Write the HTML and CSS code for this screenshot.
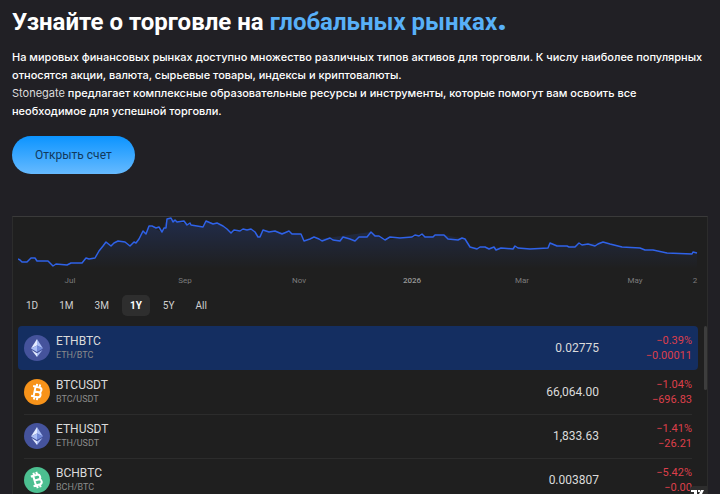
FILE: index.html
```html
<!DOCTYPE html>
<html lang="ru">

<head>
  <meta charset="UTF-8">
  <meta name="viewport" content="width=device-width, initial-scale=1.0">
  <title>Stonegate</title>
  <link rel="stylesheet" href="styles.css">
</head>

<body>
  <section class="intro">
    <h1>Узнайте о торговле на <span class="accent">глобальных рынках<b>.</b></span></h1>
    <p>На мировых финансовых рынках доступно множество различных типов активов для торговли. К числу наиболее популярных относятся акции, валюта, сырьевые товары, индексы и криптовалюты.</p>
    <p><span class="brand">Stonegate</span> предлагает комплексные образовательные ресурсы и инструменты, которые помогут вам освоить все<br> необходимое для успешной торговли.</p>
    <button type="button" class="open-account">Открыть счет</button>
  </section>

  <section class="widget">
    <svg class="chart" viewBox="0 0 684 72">
      <defs>
        <linearGradient id="fade" x1="0" y1="0" x2="0" y2="1">
          <stop offset="0" stop-color="#2962ff" stop-opacity="0.2" />
          <stop offset="1" stop-color="#2962ff" stop-opacity="0" />
        </linearGradient>
        <path id="line" d="M0 42L2 43L4 45H9L13 41L17 41L19 44L30 44L33 47L35 49L38 47L49 48L53 46L56 46L64 46L68 41L71 42L77 41L81 34L85 29L88 25L93 29L96 26L100 24L107 25L112 29L116 25L118 26L121 22L125 14L128 17L131 9L134 9L138 11L141 10L144 15L146 11L148 11L149 2L153 1L155 5L157 3L159 5L166 4L169 8L172 6L173 8L185 10L188 4L195 7L199 6L205 9L209 12L213 16L216 13L222 14L225 12L229 13L233 12L237 15L240 20H242L245 13L251 15L257 14L264 17L271 14L274 17L283 17L286 24L292 22L296 20L301 22L304 24L312 21L315 23L322 24L325 20L332 22L337 24L341 20L349 20L353 15L357 19L361 19L367 23L372 20L382 21L394 20L397 18L401 19L404 17L407 20L415 20L417 18L426 18L430 22L440 23L444 21L447 22L452 30L459 32L462 30L467 30L471 32L476 30L478 33L483 31L495 32L497 29L500 31L512 32L530 31L532 26L539 29L549 29L551 30L557 30L561 26L564 28L570 27L577 29L580 27L585 25L592 27L604 30L622 31L627 33L635 33L649 36L674 37L675 35L679 36" />
      </defs>
      <path fill="url(#fade)" d="M0 42L4 45H9L13 41L19 44H30L35 49L64 46L68 41H77L88 25L93 29L100 24L107 25L112 29L121 22L125 14L128 17L131 9L144 15L149 2L153 1L159 5L185 10L188 4L205 9L213 16L233 12L240 20L245 13L283 17L286 24L353 15L367 23L426 18L447 22L452 30L530 31L532 26L549 29L585 25L604 30L649 36L679 36V52H0Z" />
      <use href="#line" class="chart-line" />
      <g class="axis">
        <text x="52" y="66">Jul</text>
        <text x="167" y="66">Sep</text>
        <text x="281" y="66">Nov</text>
        <text x="394" y="66" class="year">2026</text>
        <text x="504" y="66">Mar</text>
        <text x="617" y="66">May</text>
        <text x="677" y="66">2</text>
      </g>
    </svg>

    <div class="ranges">
      <button type="button">1D</button>
      <button type="button">1M</button>
      <button type="button">3M</button>
      <button type="button" class="active">1Y</button>
      <button type="button">5Y</button>
      <button type="button">All</button>
    </div>

    <div class="symbols">
      <div class="row selected">
        <svg class="coin" viewBox="0 0 26 26">
          <circle cx="13" cy="13" r="13" fill="#45539c" />
          <path fill="#e3ebff" d="M13 4l-6 9.500 6-3z" />
          <path fill="#a9bdf5" d="M13 4l6 9.500-6-3z" />
          <path fill="#a9bdf5" d="M13 10.500l-6 3 6 3.500z" />
          <path fill="#7189d8" d="M13 10.500l6 3-6 3.500z" />
          <path fill="#e3ebff" d="M7.500 15l5.500 3.200V22z" />
          <path fill="#a9bdf5" d="M18.500 15L13 18.200V22z" />
        </svg>
        <div class="name">ETHBTC<small>ETH/BTC</small></div>
        <div class="price">0.02775</div>
        <div class="change">−0.39%<br>−0.00011</div>
      </div>
      <div class="row">
        <svg class="coin" viewBox="0 0 26 26">
          <circle cx="13" cy="13" r="13" fill="#f7931a" />
          <g transform="rotate(12 13 13)" fill="none" stroke="#fff" stroke-width="2">
            <path d="M8 8h6.500a2.400 2.400 0 0 1 0 4.900H10.500h4.500a2.600 2.600 0 0 1 0 5.100H8M10.500 8v10M11.500 5v3M14.500 5v3M11.500 18v3M14.500 18v3" />
          </g>
        </svg>
        <div class="name">BTCUSDT<small>BTC/USDT</small></div>
        <div class="price">66,064.00</div>
        <div class="change">−1.04%<br>−696.83</div>
      </div>
      <div class="row">
        <svg class="coin" viewBox="0 0 26 26">
          <circle cx="13" cy="13" r="13" fill="#45539c" />
          <path fill="#e3ebff" d="M13 4l-6 9.500 6-3z" />
          <path fill="#a9bdf5" d="M13 4l6 9.500-6-3z" />
          <path fill="#a9bdf5" d="M13 10.500l-6 3 6 3.500z" />
          <path fill="#7189d8" d="M13 10.500l6 3-6 3.500z" />
          <path fill="#e3ebff" d="M7.500 15l5.500 3.200V22z" />
          <path fill="#a9bdf5" d="M18.500 15L13 18.200V22z" />
        </svg>
        <div class="name">ETHUSDT<small>ETH/USDT</small></div>
        <div class="price">1,833.63</div>
        <div class="change">−1.41%<br>−26.21</div>
      </div>
      <div class="row">
        <svg class="coin" viewBox="0 0 26 26">
          <circle cx="13" cy="13" r="13" fill="#4cbf90" />
          <g transform="rotate(-16 13 13)" fill="none" stroke="#fff" stroke-width="2">
            <path d="M8 8h6.500a2.400 2.400 0 0 1 0 4.900H10.500h4.500a2.600 2.600 0 0 1 0 5.100H8M10.500 8v10M11.500 5v3M14.500 5v3M11.500 18v3M14.500 18v3" />
          </g>
        </svg>
        <div class="name">BCHBTC<small>BCH/BTC</small></div>
        <div class="price">0.003807</div>
        <div class="change">−5.42%<br>−0.00</div>
      </div>
      <div class="scrollbar"></div>
    </div>
    <svg class="tv-logo" viewBox="0 0 17 8">
      <path fill="#2e2e2e" d="M0 8V4a4 4 0 0 1 4-4h13v8z" />
      <path fill="#fff" d="M1 4h6v4H4V6H1zM8 4h2v2H8zM11 4h3l-2 4H9z" />
    </svg>
  </section>
</body>

</html>
```
FILE: styles.css
```css
* {
  box-sizing: border-box;
}

body {
  margin: 0;
  height: 100vh;
  overflow: hidden;
  display: flex;
  flex-direction: column;
  padding: 8px 12px 0;
  background-color: #212025;
  color: #fff;
  font-family: Roboto, "Liberation Sans", sans-serif;
}

h1 {
  margin: 0 0 12px;
  font-size: 24px;
  line-height: 28px;
  font-weight: 700;
}

.accent {
  color: #58b0f8;
}

.accent b {
  font-size: 32px;
  line-height: 0;
}

p {
  margin: 0;
  font-family: Inter, Roboto, sans-serif;
  font-size: 11px;
  line-height: 18px;
  font-weight: 500;
}

.brand {
  color: #dcdcdc;
  font-weight: 400;
}

button {
  border: 0;
  font-family: inherit;
  cursor: pointer;
}

.open-account {
  display: block;
  margin-top: 16px;
  height: 38px;
  padding: 0 23px;
  border-radius: 19px;
  background: linear-gradient(#0c94ff, #66baff);
  color: #12395c;
  font-size: 12px;
}

.widget {
  position: relative;
  flex: 1;
  min-height: 0;
  margin-top: 42px;
  padding: 0 5px;
  border: 1px solid #2c2c2c;
  border-top-color: #3a3a3a;
  border-bottom: 0;
  background-color: #1f1f1f;
  overflow: hidden;
}

.chart {
  display: block;
  width: 100%;
}

.chart-line {
  fill: none;
  stroke: #2f62e8;
  stroke-width: 1.5;
  stroke-linejoin: round;
}

.axis {
  fill: #7c7c7c;
  font-size: 8px;
  text-anchor: middle;
}

.year {
  fill: #989898;
  font-weight: 500;
}

.ranges {
  display: flex;
  gap: 5px;
  margin-top: 6px;
}

.ranges button {
  height: 21px;
  padding: 0 8px;
  border-radius: 5px;
  background: none;
  color: #d0d0d0;
  font-size: 10px;
}

.ranges .active {
  background-color: #2e2e2e;
  color: #fff;
  font-weight: 700;
}

.symbols {
  position: relative;
  margin-top: 10px;
  padding-right: 4px;
}

.row {
  display: flex;
  align-items: center;
  height: 44px;
  padding: 0 6px;
}

.row + .row + .row {
  background: linear-gradient(#2c2c2c, #2c2c2c) 6px 0 / calc(100% - 12px) 1px no-repeat;
}

.selected {
  border-radius: 4px;
  background-color: #142e61;
}

.coin {
  width: 26px;
  height: 26px;
  margin-right: 6px;
}

.name {
  flex: 1;
  color: #dbdbdb;
  font-size: 12px;
  line-height: 14px;
}

.name small {
  display: block;
  color: #8c8c8c;
  font-size: 9px;
  line-height: 14px;
}

.price {
  color: #dbdbdb;
  font-size: 12px;
}

.change {
  width: 93px;
  color: #dd3f4b;
  font-size: 11px;
  line-height: 15px;
  text-align: right;
}

.scrollbar {
  position: absolute;
  top: 0;
  right: -5px;
  width: 3px;
  height: 64px;
  border-radius: 2px;
  background-color: #3d3d3d;
}

.tv-logo {
  position: absolute;
  right: 0;
  bottom: 0;
  width: 17px;
  height: 8px;
}
```
